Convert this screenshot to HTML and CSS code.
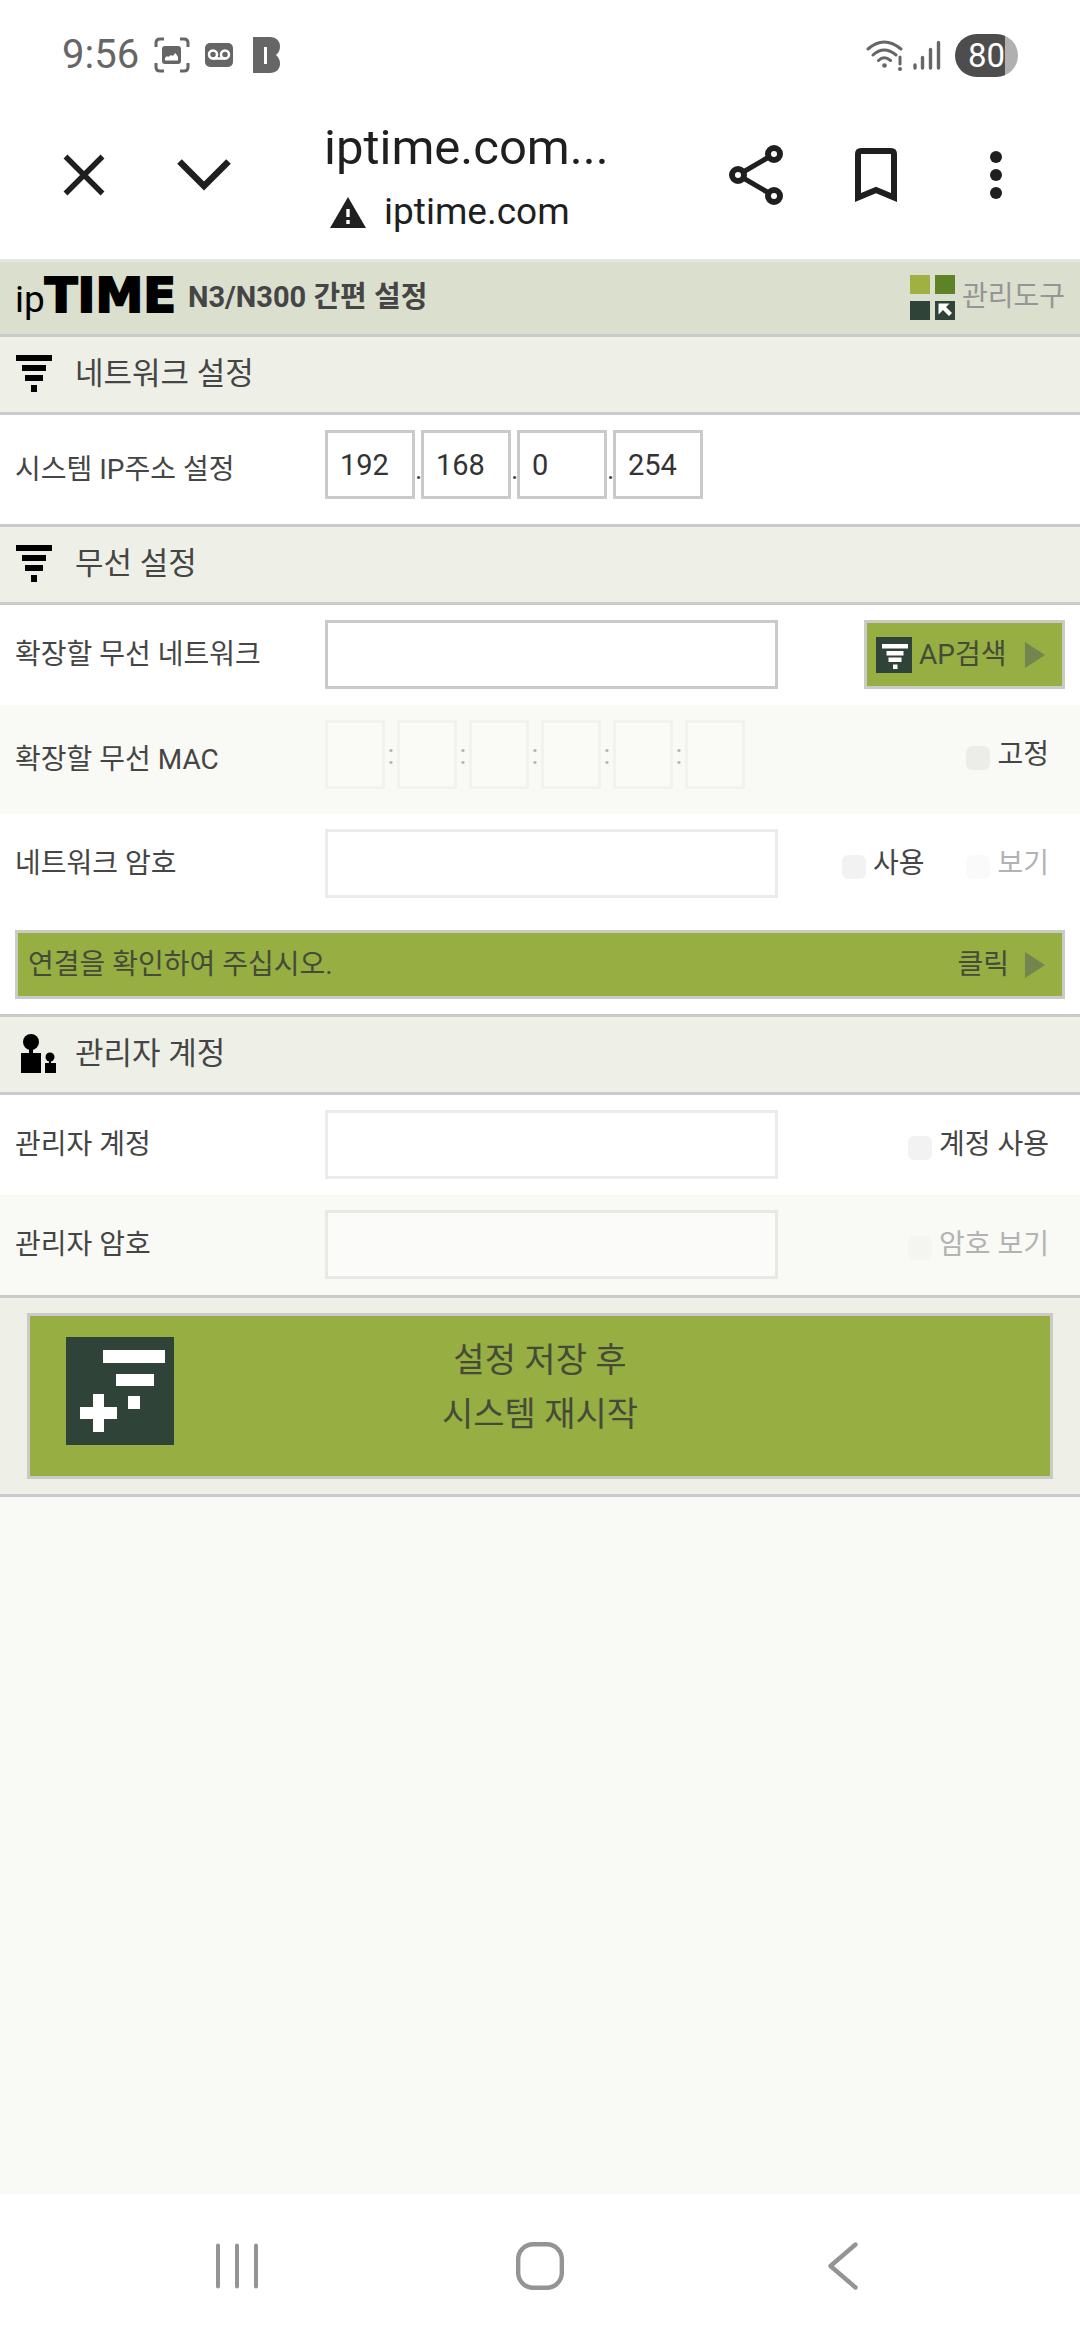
FILE: index.html
```html
<!DOCTYPE html>
<html lang="ko">
<head>
<meta charset="utf-8">
<meta name="viewport" content="width=device-width">
<title>ipTIME N3/N300 간편 설정</title>
<link rel="stylesheet" href="styles.css">
</head>
<body>
<header class="status">
  <div class="status-left">
    <span class="clock">9:56</span>
    <svg class="ic-capture" width="36" height="36" viewBox="0 0 36 36" fill="none" stroke="#666" stroke-width="3"><path d="M2 10V6q0-4 4-4h4M26 2h4q4 0 4 4v4M34 26v4q0 4-4 4h-4M10 34H6q-4 0-4-4v-4"/><path fill="#666" stroke="none" fill-rule="evenodd" d="M11 9h13q3 0 3 3v12q0 3-3 3H11q-3 0-3-3V12q0-3 3-3zm0 14.500h13V20l-2.500-4-3 3-1.500-1-3 2-1-1-2 2z"/></svg>
    <svg class="ic-voice" width="28" height="24" viewBox="0 0 28 24"><rect width="28" height="24" rx="5" fill="#666"/><g fill="none" stroke="#fff" stroke-width="2.500"><circle cx="8" cy="11.500" r="4"/><circle cx="20" cy="11.500" r="4"/><path d="M8 15.500h12"/></g></svg>
    <svg class="ic-b" width="28" height="36" viewBox="0 0 28 36"><path fill="#666" fill-rule="evenodd" d="M0 0h17c6 0 10 4 10 9 0 4-1 6-4 9 3 3 4 5 4 9 0 5-4 9-10 9H0zM11 10v17h3V10z"/></svg>
  </div>
  <div class="status-right">
    <svg width="38" height="34" viewBox="0 0 38 34" fill="none" stroke="#666" stroke-width="3" stroke-linecap="round"><path d="M2 11Q18 -3 35 11M7 17Q18 7 30 17M12.500 22.500Q18 17 24.500 22.500M34 19v7"/><g fill="#666" stroke="none"><circle cx="18.500" cy="27.500" r="2.300"/><circle cx="34" cy="31" r="2"/></g></svg>
    <svg class="ic-signal" width="28" height="30" viewBox="0 0 28 30" stroke="#666" stroke-width="3.400" stroke-linecap="round"><path d="M2 25v3M9.500 17.500V28M17.500 9.500V28M25.500 2.500V28"/></svg>
    <span class="battery">80</span>
  </div>
</header>

<div class="appbar">
  <button class="app-btn" aria-label="닫기"><svg width="42" height="42" viewBox="0 0 42 42"><path d="M2.500 2.500l37 37M39.500 2.500l-37 37" stroke="#1f1f1f" stroke-width="5.500"/></svg></button>
  <button class="app-btn" aria-label="최소화"><svg width="54" height="42" viewBox="0 0 54 42"><path d="M2.500 7.500L27 32 51.500 7.500" fill="none" stroke="#1f1f1f" stroke-width="6.500"/></svg></button>
  <div class="site">
    <div class="site-title">iptime.com...</div>
    <div class="site-host"><svg width="36" height="31" viewBox="0 0 36 31"><path d="M18 0l18 31H0z" fill="#1f1f1f"/><path d="M16.300 12h3.400v8h-3.400zM16.300 23h3.400v4h-3.400z" fill="#fff"/></svg><span>iptime.com</span></div>
  </div>
  <button class="app-btn" aria-label="공유"><svg width="54" height="60" viewBox="0 0 54 60" fill="none" stroke="#1f1f1f" stroke-width="6"><path d="M45 9L9 30l36 21" stroke-width="5"/><g fill="#fff"><circle cx="45" cy="9" r="6"/><circle cx="9" cy="30" r="6"/><circle cx="45" cy="51" r="6"/></g></svg></button>
  <button class="app-btn" aria-label="북마크"><svg width="42" height="54" viewBox="0 0 42 54"><path d="M3 49.500V6q0-3 3-3h30q3 0 3 3v43.500L21 42z" fill="none" stroke="#1f1f1f" stroke-width="6"/></svg></button>
  <button class="app-btn" aria-label="메뉴"><svg width="12" height="48" viewBox="0 0 12 48" fill="#1f1f1f"><circle cx="6" cy="6" r="6"/><circle cx="6" cy="24" r="6"/><circle cx="6" cy="42" r="6"/></svg></button>
</div>

<main class="page">
  <div class="titlebar">
    <span class="logo"><span class="logo-ip">ip</span><span class="logo-time">TIME</span></span>
    <h1 class="title">N3/N300 간편 설정</h1>
    <a class="admin-link" href="#"><svg width="45" height="45" viewBox="0 0 45 45"><path fill="#a1b042" d="M0 0h20v19H0z"/><path fill="#5e8226" d="M25 0h20v19H25z"/><path fill="#2f4338" d="M0 26h20v19H0zM25 26h20v19H25z"/><path d="M28.500 28.500h11l-3.500 3.500 6 6-3 3-6-6-4.500 4.500z" fill="#fff"/></svg>관리도구</a>
  </div>

  <form>
  <h2 class="section"><svg width="41" height="37" viewBox="0 0 41 37"><path d="M1 0h36v6H1zM7 10h24v6H7zM10 20h18v6H10zM16 30h6v7h-6z"/></svg>네트워크 설정</h2>
  <div class="row tall">
    <label class="name" for="ip1">시스템 IP주소 설정</label>
    <div class="quad">
      <input class="box" id="ip1" value="192"><span>.</span><input class="box" value="168" aria-label="IP 2"><span>.</span><input class="box" value="0" aria-label="IP 3"><span>.</span><input class="box" value="254" aria-label="IP 4">
    </div>
  </div>

  <h2 class="section ruled"><svg width="41" height="37" viewBox="0 0 41 37"><path d="M1 0h36v6H1zM7 10h24v6H7zM10 20h18v6H10zM16 30h6v7h-6z"/></svg>무선 설정</h2>
  <div class="row">
    <label class="name" for="ssid">확장할 무선 네트워크</label>
    <input class="box" id="ssid">
    <div class="side">
      <button type="button" class="green search"><svg width="36" height="36" viewBox="0 0 36 36"><path fill="#2f4338" d="M0 0h36v36H0z"/><path fill="#fff" d="M6 7h26v4.500H6zM10.500 14h17v4.500h-17zM12.500 20.500h13V25h-13zM17 27.500h4.500V32H17z"/></svg><span>AP검색</span><i class="arrow"></i></button>
    </div>
  </div>
  <div class="row alt tall">
    <label class="name" for="mac1">확장할 무선 MAC</label>
    <div class="hex">
      <input class="box" id="mac1" disabled><span>:</span><input class="box" disabled aria-label="MAC 2"><span>:</span><input class="box" disabled aria-label="MAC 3"><span>:</span><input class="box" disabled aria-label="MAC 4"><span>:</span><input class="box" disabled aria-label="MAC 5"><span>:</span><input class="box" disabled aria-label="MAC 6">
    </div>
    <div class="side checks"><label class="check"><input type="checkbox">고정</label></div>
  </div>
  <div class="row">
    <label class="name" for="key">네트워크 암호</label>
    <input class="box" id="key" disabled>
    <div class="side checks"><label class="check"><input type="checkbox">사용</label><label class="check off"><input type="checkbox" disabled>보기</label></div>
  </div>
  <div class="connect"><button type="button" class="green"><span>연결을 확인하여 주십시오.</span><span class="click">클릭</span><i class="arrow"></i></button></div>

  <h2 class="section ruled"><svg width="41" height="39" viewBox="0 0 41 39"><circle cx="16" cy="8" r="8"/><path d="M14 14h4v5h8v20H6V19h8z"/><circle cx="35" cy="23" r="4.500"/><path d="M34 26h2v3h5v10H30V29h4z"/></svg>관리자 계정</h2>
  <div class="row">
    <label class="name" for="user">관리자 계정</label>
    <input class="box" id="user" disabled>
    <div class="side checks"><label class="check"><input type="checkbox">계정 사용</label></div>
  </div>
  <div class="row alt">
    <label class="name" for="pass">관리자 암호</label>
    <input class="box" id="pass" disabled>
    <div class="side checks"><label class="check off"><input type="checkbox" disabled>암호 보기</label></div>
  </div>

  <div class="submit">
    <button type="button" class="green save"><svg width="108" height="108" viewBox="0 0 108 108"><path fill="#2f4338" d="M0 0h108v108H0z"/><path fill="#fff" d="M37 13h62v13H37zM50 37h38v12H50zM62 59h12v13H62zM27 57h11v13h13v12H38v13H27V82H14V70h13z"/></svg><span>설정 저장 후<br>시스템 재시작</span></button>
  </div>
  </form>
</main>

<nav class="sysnav">
  <button aria-label="최근 앱"><svg width="42" height="46" viewBox="0 0 42 46"><path d="M2 2.500v41M21 2.500v41M40 2.500v41" stroke="#949494" stroke-width="4" stroke-linecap="round"/></svg></button>
  <button aria-label="홈"><svg width="48" height="48" viewBox="0 0 48 48"><rect x="2.200" y="2.200" width="43.600" height="43.600" rx="15" fill="none" stroke="#949494" stroke-width="4.400"/></svg></button>
  <button aria-label="뒤로"><svg width="30" height="48" viewBox="0 0 30 48"><path d="M27.500 2.500L2.500 24l25 21.500" fill="none" stroke="#949494" stroke-width="4.400" stroke-linecap="round" stroke-linejoin="round"/></svg></button>
</nav>
</body>
</html>
```
FILE: styles.css
```css
* { box-sizing: border-box; }

body {
  margin: 0;
  min-height: 100vh;
  display: flex;
  flex-direction: column;
  background: #fff;
  color: #454545;
  font-family: Roboto, "Noto Sans CJK KR", sans-serif;
  font-size: 28px;
  line-height: 40px;
}

button {
  margin: 0;
  padding: 0;
  border: 0;
  background: none;
  color: inherit;
  font: inherit;
}

svg { display: block; flex: none; }

/* phone status bar */
.status {
  height: 110px;
  padding: 0 62px;
  display: flex;
  align-items: center;
  justify-content: space-between;
}
.status-left, .status-right { display: flex; align-items: center; }
.clock {
  color: #666;
  font-size: 40px;
}
.ic-capture { margin-left: 15px; }
.ic-voice { margin-left: 15px; }
.ic-b { margin-left: 20px; }
.ic-signal { margin-left: 9px; }
.battery {
  width: 63px;
  height: 43px;
  margin-left: 14px;
  border-radius: 22px;
  background: linear-gradient(90deg, #4d4d4d 50px, #b0b0b0 50px);
  color: #fff;
  font-size: 33px;
  line-height: 43px;
  text-align: center;
}

/* browser bar */
.appbar {
  height: 149px;
  padding: 6px 24px 0;
  display: flex;
  align-items: flex-start;
  color: #1f1f1f;
}
.app-btn {
  width: 120px;
  height: 118px;
  display: flex;
  align-items: center;
  justify-content: center;
}
.site {
  flex: 1;
  min-width: 0;
  padding-left: 60px;
  line-height: 64px;
  white-space: nowrap;
}
.site-title { font-size: 49px; }
.site-host {
  display: flex;
  align-items: center;
  gap: 18px;
  padding-left: 6px;
  font-size: 37px;
}

/* router page */
.page {
  flex: 1;
  background: #f9faf5;
  border-top: 3px solid #e5e5e5;
}
.titlebar {
  height: 75px;
  padding: 0 15px 2px;
  display: flex;
  align-items: center;
  background: #dbdfcd;
  border-bottom: 3px solid #cacbc8;
}
.logo {
  display: flex;
  align-items: baseline;
  color: #000;
}
.logo-ip { font-size: 37px; }
.logo-time {
  font-family: "DejaVu Sans", sans-serif;
  font-size: 48px;
  font-weight: 700;
  -webkit-text-stroke: 2px #000;
}
.title {
  flex: 1;
  margin: 0 0 0 12px;
  font-size: 29px;
  font-weight: 700;
}
.admin-link {
  display: flex;
  align-items: center;
  gap: 7px;
  color: #959595;
  text-decoration: none;
}

.section {
  height: 78px;
  margin: 0;
  padding: 0 15px 2px;
  display: flex;
  align-items: center;
  gap: 19px;
  background: #eef0e7;
  border-bottom: 3px solid #cacaca;
  font-size: 31px;
  font-weight: 400;
}
.section.ruled { height: 81px; border-top: 3px solid #cacaca; }

.row {
  min-height: 100px;
  padding: 15px 0;
  display: grid;
  grid-template-columns: 325fr 453fr 302fr;
  align-items: start;
  background: #fff;
}
.row.tall { padding-bottom: 25px; }
.row.alt { background: #f9faf5; }
.name { align-self: center; padding-left: 15px; }
.tall .name { padding-top: 10px; }

.box {
  width: 100%;
  min-width: 0;
  height: 69px;
  padding: 0 12px;
  border: 3px solid #cacaca;
  border-radius: 0;
  background: #fff;
  color: #333;
  font: 29px/40px Roboto, sans-serif;
}
.box:disabled { border-color: #ebebeb; }
.alt .box:disabled { border-color: #e8e8e5; background: #fbfbf9; }
.alt .hex .box:disabled { border-color: #f2f3ee; background: #fafbf7; }

.quad, .hex { display: flex; }
.quad .box { width: 90px; }
.hex .box { width: 60px; padding: 0; }
.quad span { width: 6px; height: 69px; line-height: 80px; }
.hex span {
  width: 12px;
  color: #b3b4ae;
  line-height: 69px;
  text-align: center;
}

.side {
  height: 69px;
  padding-right: 15px;
  display: flex;
  align-items: center;
  justify-content: flex-end;
}
.checks { padding-right: 31px; gap: 42px; }
.check { display: flex; align-items: center; gap: 7px; }
.check input {
  appearance: none;
  width: 24px;
  height: 24px;
  margin: 6px 0 0;
  border-radius: 6px;
  background: rgba(0, 0, 0, .05);
}
.check.off { color: #b3b3b3; }
.check.off input { background: rgba(0, 0, 0, .02); }

.green {
  width: 100%;
  height: 69px;
  padding: 0 17px 0 10px;
  display: flex;
  align-items: center;
  border: 3px solid #cacbc6;
  background: #96ae42;
  color: #454b38;
}
.green.search { width: 201px; gap: 7px; padding-left: 9px; }
.search .arrow { margin-left: auto; }
.click { margin-left: auto; margin-right: 16px; }
.arrow {
  border-left: 20px solid #748550;
  border-top: 13px solid transparent;
  border-bottom: 13px solid transparent;
}
.connect { padding: 16px 15px 15px; background: #fff; }

.submit {
  padding: 15px 27px;
  background: #eef0e7;
  border-top: 3px solid #cacaca;
  border-bottom: 3px solid #cacaca;
}
.green.save {
  height: auto;
  padding: 17px 36px 31px;
  display: grid;
  grid-template-columns: 108px 1fr 108px;
  align-items: start;
  font-size: 34px;
  line-height: 54px;
}
.save svg { margin-top: 4px; }

/* phone navigation bar */
.sysnav {
  height: 146px;
  padding: 0 86px 2px;
  display: flex;
}
.sysnav button {
  flex: 1;
  display: flex;
  align-items: center;
  justify-content: center;
}
```
